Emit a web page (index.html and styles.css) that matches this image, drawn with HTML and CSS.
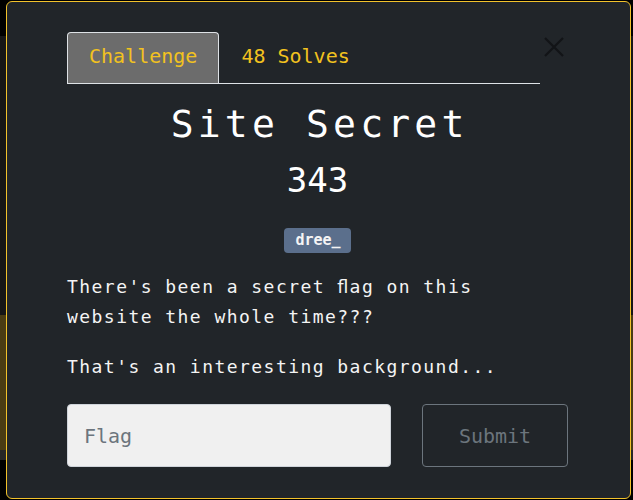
FILE: index.html
```html
<!DOCTYPE html>
<html lang="en">
<head>
<meta charset="utf-8">
<title>Site Secret</title>
<link rel="stylesheet" href="styles.css">
</head>
<body>
<div class="page">
  <div class="topbar"></div>
  <div class="hero"></div>
  <div class="band"></div>
  <div class="strip"></div>
</div>

<div class="modal" role="dialog">
  <div class="modal-content">
    <div class="modal-header">
      <ul class="tabs">
        <li class="tab active">Challenge</li>
        <li class="tab">48 Solves</li>
      </ul>
      <button class="close" aria-label="Close">
        <svg width="20" height="20" viewBox="0 0 20 20"><path d="M1 1 L19 19 M19 1 L1 19" stroke="#121417" stroke-width="2.2" fill="none"/></svg>
      </button>
    </div>
    <h2 class="title">Site Secret</h2>
    <h3 class="value">343</h3>
    <div class="tags"><span class="badge">dree_</span></div>
    <div class="description">
      <p>There's been a secret ﬂag on this website the whole time???</p>
      <p>That's an interesting background...</p>
    </div>
    <form class="flag-form">
      <input class="flag-input" type="text" placeholder="Flag">
      <button class="submit" type="button">Submit</button>
    </form>
  </div>
</div>
</body>
</html>
```
FILE: styles.css
```css
* { box-sizing: border-box; }
html, body { margin: 0; padding: 0; }
body {
  background: #000;
  font-family: "DejaVu Sans Mono", "Liberation Mono", monospace;
  width: 633px;
  height: 500px;
  overflow: hidden;
}
.page { display: flex; flex-direction: column; }
.topbar { height: 36px; background: #000; }
.hero { height: 279px; background: #161616; }
.band { height: 135px; background: #4a3c13; }
.strip { height: 10px; background: #262626; }

.modal {
  position: fixed;
  left: 6px;
  top: 1px;
  width: 625px;
  height: 498px;
  background: #212529;
  border: 1px solid #f2c22b;
  border-radius: 6px;
}
.modal-content {
  padding: 30px 62px 0 60px;
  display: flex;
  flex-direction: column;
}
.modal-header {
  display: flex;
  align-items: flex-start;
}
.tabs {
  flex: 1;
  list-style: none;
  margin: 0;
  padding: 0;
  display: flex;
  border-bottom: 1px solid #dee2e6;
}
.tab {
  font-size: 20px;
  line-height: 24px;
  padding: 11px 21px 15px;
  color: #f2c21f;
  border: 1px solid transparent;
  border-bottom: 0;
  border-radius: 4px 4px 0 0;
}
.tab.active {
  background: #6c6c6c;
  border-color: #dee2e6;
}
.close {
  width: 28px;
  height: 20px;
  margin-top: 5px;
  padding: 0;
  border: 0;
  background: none;
  display: flex;
  justify-content: center;
}
.title {
  margin: 17px 0 0;
  text-align: center;
  color: #fff;
  font-weight: normal;
  font-size: 38px;
  line-height: 46px;
  letter-spacing: 4.2px;
  padding-left: 4.2px;
}
.value {
  margin: 13px 0 0;
  text-align: center;
  color: #fff;
  font-weight: normal;
  font-size: 34px;
  line-height: 41px;
}
.tags {
  margin-top: 27px;
  display: flex;
  justify-content: center;
}
.badge {
  background: #5b6f8c;
  color: #f4f4f4;
  font-weight: bold;
  font-size: 15px;
  line-height: 17px;
  padding: 4px 10px 4px 11px;
  border-radius: 4px;
}
.description {
  margin-top: 19px;
  color: #f4f4f4;
  font-size: 18px;
  line-height: 30px;
  letter-spacing: 1.45px;
  width: 473px;
}
.description p { margin: 0 0 20px; }
.description p:last-child { margin-bottom: 0; }
.flag-form {
  margin-top: 22px;
  display: flex;
  gap: 31px;
}
.flag-input {
  flex: 1;
  height: 63px;
  background: #f0f0f0;
  border: 1px solid #cfd4da;
  border-radius: 4px;
  padding: 0 16px;
  font-family: inherit;
  font-size: 20px;
  color: #333;
}
.flag-input::placeholder { color: #6c757d; }
.submit {
  width: 146px;
  height: 63px;
  background: transparent;
  border: 1px solid #6c757d;
  border-radius: 4px;
  color: #6c757d;
  font-family: inherit;
  font-size: 20px;
}
```
